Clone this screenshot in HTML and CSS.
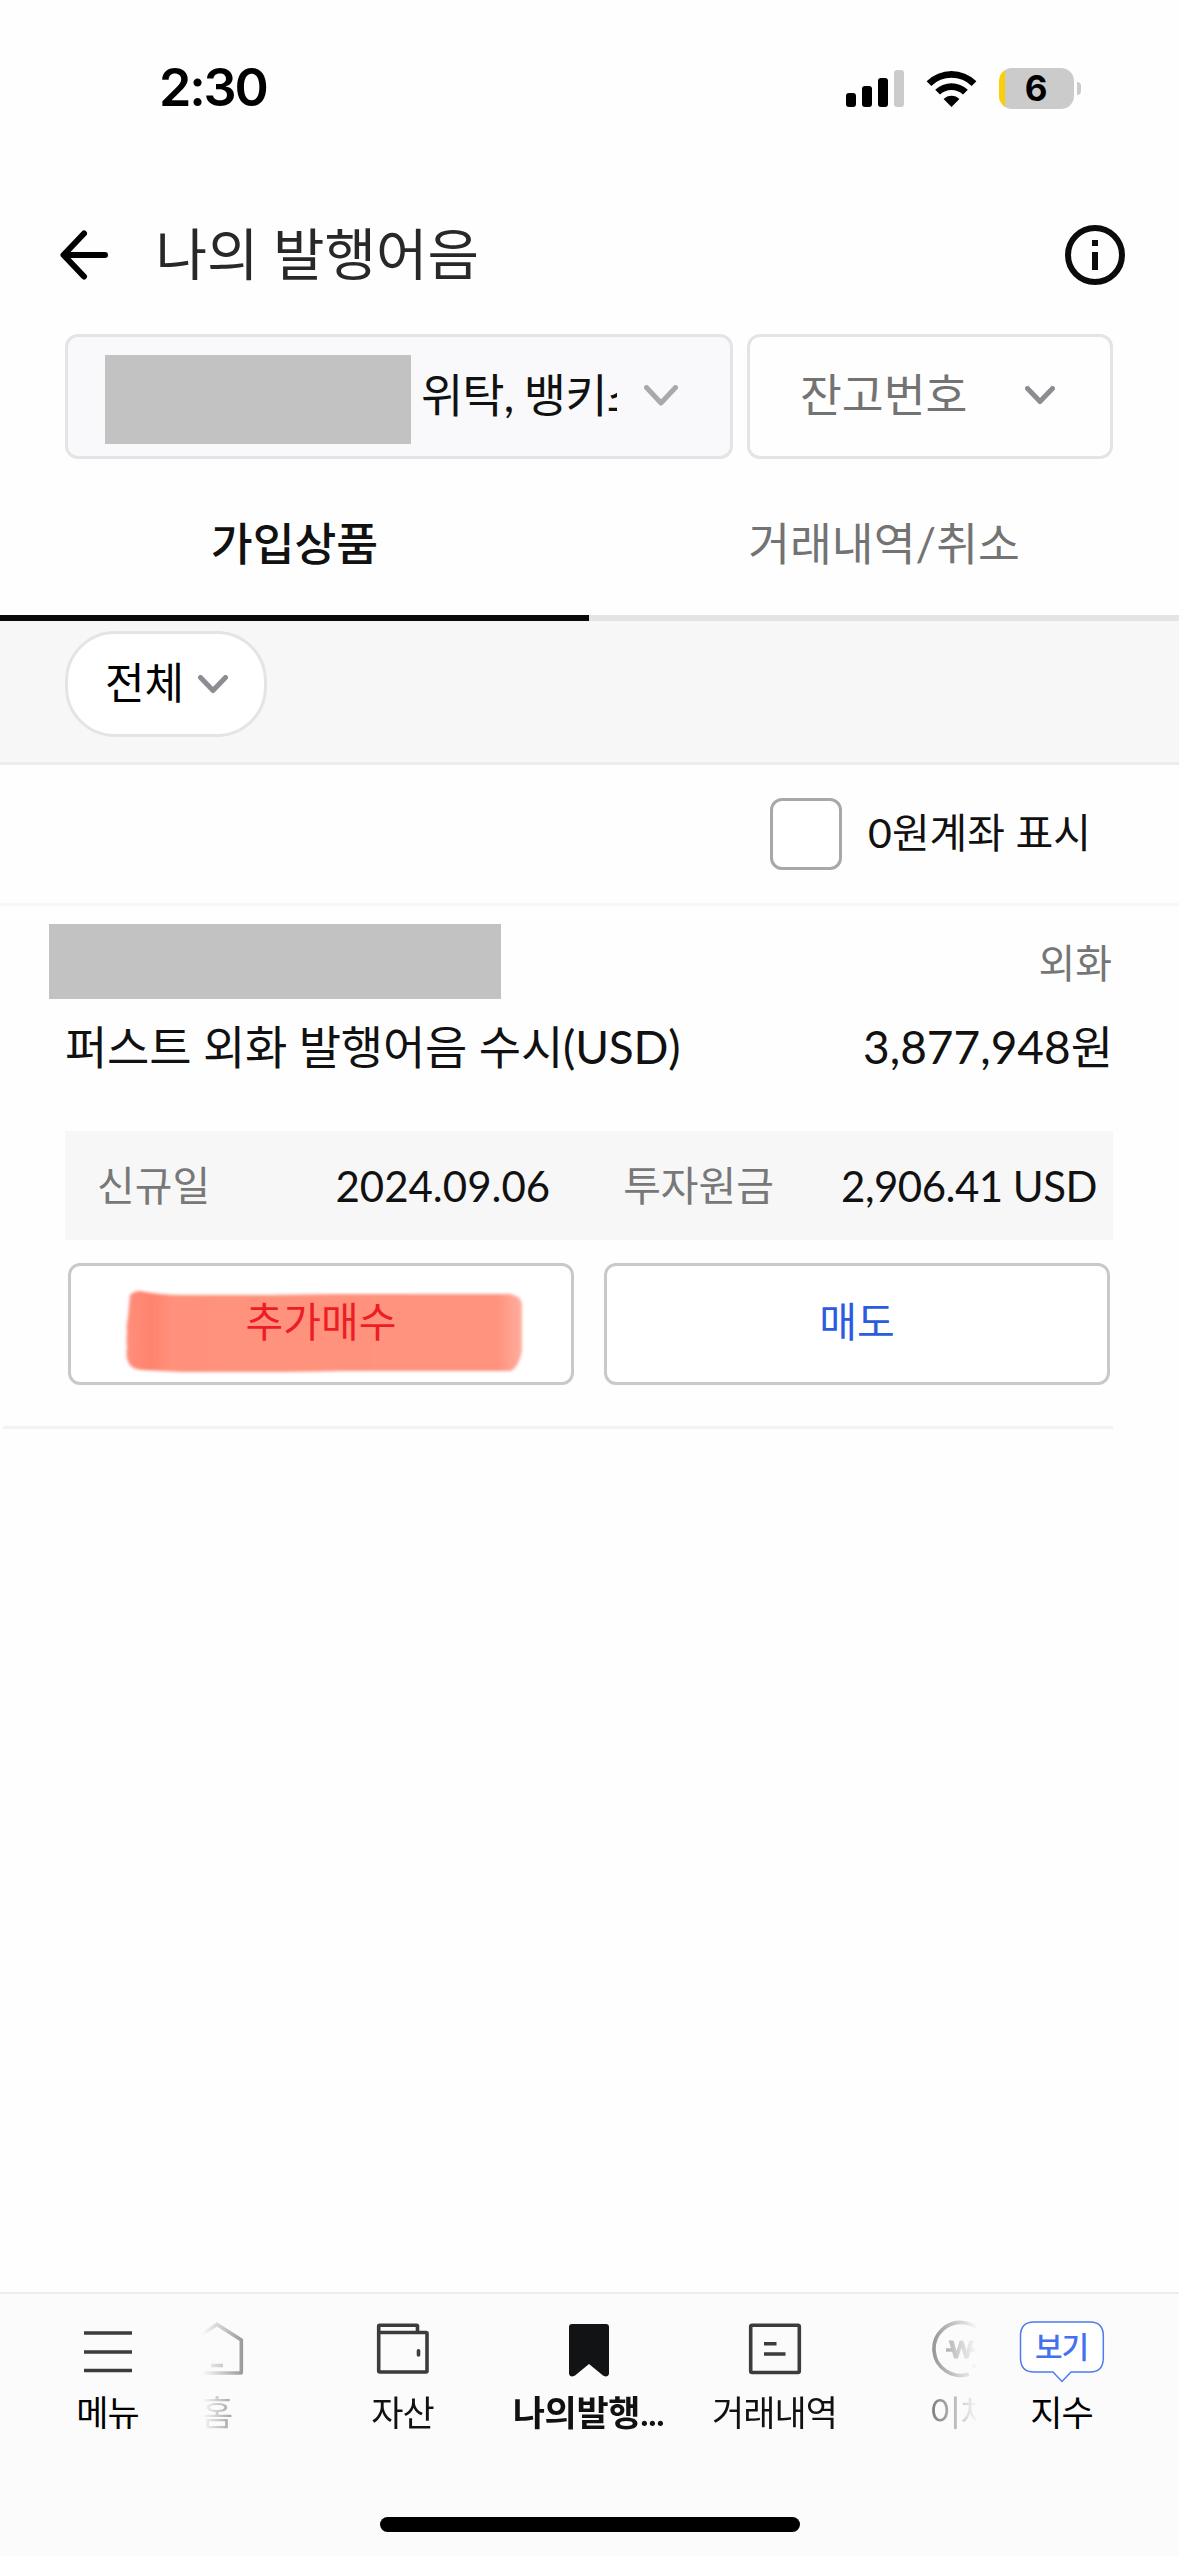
FILE: index.html
```html
<!DOCTYPE html>
<html lang="ko">
<head>
    <meta charset="UTF-8">
    <meta name="viewport" content="width=device-width, initial-scale=1.0">
    <title>나의 발행어음</title>
    <link rel="stylesheet" href="styles.css">
</head>
<body>
    <div class="screen">
        <!-- Status bar -->
        <div class="status-bar">
            <span class="time">2:30</span>
            <div class="status-icons">
                <svg class="signal" width="58" height="37" viewBox="0 0 58 37">
                    <rect x="0" y="23" width="10" height="14" rx="3"/>
                    <rect x="16" y="16" width="10" height="21" rx="3"/>
                    <rect x="32" y="8" width="10" height="29" rx="3"/>
                    <rect x="48" y="0" width="10" height="37" rx="3" fill="#cbcbcb"/>
                </svg>
                <svg class="wifi" width="51" height="37" viewBox="0 0 51 37">
                    <path d="M0.6 11.2 A35.5 35.5 0 0 1 50.4 11.2 L45.6 15.9 A28.8 28.8 0 0 0 5.4 15.9 Z"/>
                    <path d="M9.2 19.8 A23.5 23.5 0 0 1 41.8 19.8 L37 24.6 A16.6 16.6 0 0 0 14 24.6 Z"/>
                    <path d="M17.6 29 A11 11 0 0 1 33.4 29 L25.5 37 Z"/>
                </svg>
                <div class="battery">
                    <div class="battery-body">6</div>
                    <div class="battery-tip"></div>
                </div>
            </div>
        </div>

        <!-- Title -->
        <header class="header">
            <svg class="back" width="50" height="50" viewBox="0 0 50 50">
                <path d="M46 25 H5 M25 3.5 L4.500 25 L25 46.5"/>
            </svg>
            <h1>나의 발행어음</h1>
            <svg class="info" width="60" height="60" viewBox="0 0 60 60">
                <circle cx="30" cy="30" r="27"/>
                <path d="M30 15 V21 M30 27 V45"/>
            </svg>
        </header>

        <!-- Account selects -->
        <div class="selects">
            <div class="select account">
                <span class="mask mask-account"></span>
                <span class="account-name">위탁, 뱅키스</span>
                <svg width="34" height="22" viewBox="0 0 34 22"><path stroke="#a9a9ab" d="M2.5 2.5 L17 18 L31.5 2.5"/></svg>
            </div>
            <div class="select balance">
                <span>잔고번호</span>
                <svg width="30" height="20" viewBox="0 0 30 20"><path d="M2.5 2.5 L15 15.5 L27.5 2.5"/></svg>
            </div>
        </div>

        <!-- Tabs -->
        <div class="tabs">
            <div class="tab active">가입상품</div>
            <div class="tab">거래내역/취소</div>
        </div>

        <div class="filter">
            <div class="pill">
                <span>전체</span>
                <svg width="30" height="20" viewBox="0 0 30 20"><path d="M2.5 2.5 L15 15.5 L27.5 2.5"/></svg>
            </div>
        </div>

        <label class="zero-row">
            <input type="checkbox">
            <span>0원계좌 표시</span>
        </label>

        <!-- Product -->
        <section class="product">
            <div class="product-top">
                <span class="mask mask-number"></span>
                <span class="kind">외화</span>
            </div>
            <div class="product-name">
                <span class="name">퍼스트 외화 발행어음 수시(USD)</span>
                <span>3,877,948원</span>
            </div>
            <div class="detail">
                <span class="key">신규일</span>
                <span class="value date">2024.09.06</span>
                <span class="key">투자원금</span>
                <span class="value amount">2,906.41 USD</span>
            </div>
            <div class="actions">
                <button class="buy">
                    <svg class="marker" width="404" height="92" viewBox="0 0 404 92">
                        <defs>
                            <linearGradient id="ink">
                                <stop offset="0" stop-color="#ff8f7b"/>
                                <stop offset="0.06" stop-color="#ff836d"/>
                                <stop offset="0.12" stop-color="#ff917c"/>
                                <stop offset="0.94" stop-color="#ff937e"/>
                                <stop offset="1" stop-color="#ffae9f"/>
                            </linearGradient>
                            <filter id="soft" x="-5%" y="-10%" width="110%" height="120%">
                                <feGaussianBlur stdDeviation="1.6"/>
                            </filter>
                        </defs>
                        <path fill="url(#ink)" filter="url(#soft)" d="M8 8 Q12 4 18 4 Q38 8 60 8 H150 Q190 7 210 7 H388 Q399 9 400 17 V64 Q397 80 389 84 H220 Q170 85 140 85 H60 L20 83 Q8 83 5 72 Q4 66 5 60 Q4 54 5 46 Q4 38 6 30 Z"/>
                    </svg>
                    <span>추가매수</span>
                </button>
                <button class="sell">매도</button>
            </div>
        </section>

        <!-- Bottom navigation -->
        <nav class="bottom-nav">
            <div class="nav-row">
                <div class="nav-item nav-menu">
                    <svg width="60" height="60" viewBox="0 0 60 60"><path d="M6 15 H54 M6 34 H54 M6 52.5 H54"/></svg>
                    <span>메뉴</span>
                </div>
                <div class="nav-scroll">
                    <div class="nav-item">
                        <svg width="60" height="60" viewBox="0 0 60 60">
                            <path d="M30 6.5 L54.3 22 V54.3 Q54.3 55 53.5 55 H6.5 Q5.7 55 5.7 54 V22 Z M24 47.5 H36"/>
                        </svg>
                        <span>홈</span>
                    </div>
                    <div class="nav-item">
                        <svg width="60" height="60" viewBox="0 0 60 60">
                            <path d="M5.7 14.5 V8 Q5.7 7.2 6.5 7.2 H43.5 Q44.5 7.2 44.5 8 V14.5 M5.7 14.5 H53 Q54 14.5 54 15.5 V53 Q54 54 53 54 H6.7 Q5.7 54 5.7 53 Z"/>
                            <path stroke-linecap="round" d="M45.5 32.8 V37"/>
                        </svg>
                        <span>자산</span>
                    </div>
                    <div class="nav-item current">
                        <svg width="60" height="60" viewBox="0 0 60 60">
                            <path class="solid" d="M13 6 H47 Q50 6 50 9 V56 Q49 60 44 57.5 L30 46 L16 57.5 Q11 60 10 56 V9 Q10 6 13 6 Z"/>
                        </svg>
                        <span>나의발행...</span>
                    </div>
                    <div class="nav-item">
                        <svg width="60" height="60" viewBox="0 0 60 60">
                            <rect x="5.7" y="7.2" width="48.6" height="47.3" rx="1.5"/>
                            <path d="M19 25.7 H31.5 M19 36 H40.5"/>
                        </svg>
                        <span>거래내역</span>
                    </div>
                    <div class="nav-item">
                        <svg width="60" height="60" viewBox="0 0 60 60">
                            <path d="M38 56 A26.5 26.5 0 1 1 54 41 M42 48 H54 M15 32 H22 M37 32 H44"/>
                            <text class="won" x="30" y="39.5" text-anchor="middle">W</text>
                        </svg>
                        <span>이체</span>
                    </div>
                </div>
                <div class="nav-item nav-index">
                    <svg width="86" height="62" viewBox="0 0 86 62">
                        <path class="bubble" d="M15 1 H71 Q84.3 1 84.3 15 V37 Q84.3 51 71 51 H52 L43 60.5 L34 51 H15 Q1.5 51 1.5 37 V15 Q1.5 1 15 1 Z"/>
                        <text class="bubble-text" x="42.5" y="37" text-anchor="middle">보기</text>
                    </svg>
                    <span>지수</span>
                </div>
            </div>
            <div class="home-indicator"></div>
        </nav>
    </div>
</body>
</html>
```
FILE: styles.css
```css
* {
    box-sizing: border-box;
}

body {
    margin: 0;
    background: #fefefe;
    color: #111;
    font-family: Lato, "Noto Sans CJK KR", sans-serif;
    font-size: 46px;
    line-height: 60px;
}

.screen {
    width: 1179px;
    height: 2556px;
    display: flex;
    flex-direction: column;
    overflow: hidden;
    white-space: nowrap;
}

svg {
    display: block;
    flex: none;
}

.mask {
    background: #c2c2c2;
    flex: none;
}

/* Status bar */
.status-bar {
    height: 200px;
    padding: 58px 98px 0 159px;
    display: flex;
    justify-content: space-between;
    align-items: flex-start;
    font-family: Inter, sans-serif;
    font-weight: 600;
    color: #000;
}

.time {
    font-size: 52px;
    letter-spacing: -2.2px;
}

.status-icons {
    display: flex;
    align-items: center;
    height: 60px;
}

.wifi {
    margin-left: 22px;
}

.battery {
    display: flex;
    align-items: center;
    gap: 3px;
    margin-left: 22px;
}

.battery-body {
    width: 75px;
    height: 41px;
    border-radius: 13px;
    background: linear-gradient(to right, #fbcd0a 5.5px, #cbcbcb 5.5px);
    font-size: 35px;
    font-weight: 700;
    line-height: 41px;
    text-align: center;
    text-indent: -1px;
}

.battery-tip {
    width: 4px;
    height: 13px;
    border-radius: 0 4px 4px 0;
    background: #cbcbcb;
}

/* Header */
.header {
    height: 110px;
    padding: 0 54px 0 59px;
    display: flex;
    align-items: center;
}

.header h1 {
    flex: 1;
    margin: -2px 0 0 46.5px;
    font-size: 56px;
    font-weight: 400;
    color: #282828;
}

.back path {
    fill: none;
    stroke: #000;
    stroke-width: 6;
    stroke-linecap: round;
    stroke-linejoin: round;
}

.info {
    fill: none;
    stroke: #0b0b0b;
    stroke-width: 6;
}

/* Selects */
.selects {
    display: flex;
    gap: 14px;
    padding: 24px 66px 0 65px;
}

.select {
    height: 125px;
    display: flex;
    align-items: center;
    padding-bottom: 4px;
    border: 3px solid #e3e4e6;
    border-radius: 13px;
}

.account {
    width: 668px;
    padding-left: 37px;
    background: #f9f9fb;
}

.mask-account {
    width: 306px;
    height: 89px;
    margin-top: 9px;
}

.account-name {
    width: 204px;
    margin: 0 27px 0 2px;
    padding-left: 8px;
    overflow: hidden;
    letter-spacing: -1px;
}

.select svg,
.pill svg {
    margin-top: 3px;
    fill: none;
    stroke: #8c8c92;
    stroke-width: 5;
    stroke-linecap: round;
    stroke-linejoin: round;
}

.balance {
    flex: 1;
    justify-content: space-between;
    padding-left: 50px;
    padding-right: 55px;
    color: #737373;
    font-size: 45.5px;
}

/* Tabs */
.tabs {
    display: flex;
    height: 162px;
}

.tab {
    width: 590px;
    padding-top: 55px;
    border-bottom: 6px solid #e3e4e5;
    color: #737373;
    font-size: 45.5px;
    text-align: center;
}

.tab.active {
    width: 589px;
    border-color: #0a0a0a;
    color: #111;
    font-weight: 500;
}

.filter {
    height: 144px;
    padding: 10px 65px;
    background: #f7f7f7;
    border-bottom: 3px solid #ececee;
}

.pill {
    width: 202px;
    height: 106px;
    padding: 0 36px 2px 37px;
    display: flex;
    align-items: center;
    justify-content: space-between;
    background: #fff;
    border: 3px solid #e3e4e6;
    border-radius: 50px;
    color: #000;
    font-size: 43px;
}

.zero-row {
    height: 141px;
    padding: 0 88px 2px 0;
    display: flex;
    align-items: center;
    justify-content: flex-end;
    gap: 26px;
    border-bottom: 3px solid #f7f7f7;
    font-size: 41px;
}

.zero-row input {
    appearance: none;
    width: 72px;
    height: 72px;
    margin: 2px 0 0;
    border: 3px solid #a8a8ac;
    border-radius: 12px;
    background: #fff;
}

/* Product */
.product {
    margin: 0 66px 0 3px;
    padding: 18px 0 41px 62px;
    border-bottom: 3px solid #f1f2f5;
}

.product-top {
    height: 75px;
    margin-left: -16px;
    display: flex;
    justify-content: space-between;
}

.mask-number {
    width: 452px;
}

.kind {
    padding: 9px 1px 0 0;
    color: #767676;
    font-size: 40px;
}

.product-name {
    display: flex;
    justify-content: space-between;
    padding-top: 18px;
    height: 132px;
}

.name {
    letter-spacing: -0.2px;
}

.detail {
    height: 109px;
    padding: 0 16px 0 32px;
    display: flex;
    align-items: center;
    background: #f7f7f7;
    font-size: 41px;
}

.key {
    color: #787878;
}

.value {
    font-size: 42px;
}

.date {
    flex: 1;
    text-align: right;
    margin-right: 73px;
}

.amount {
    margin-left: 67px;
    letter-spacing: -0.5px;
}

.actions {
    display: flex;
    gap: 30px;
    padding: 23px 3px 0;
}

.actions button {
    position: relative;
    flex: 1;
    height: 122px;
    padding: 0 0 4px;
    background: #fff;
    border: 3px solid #c9c9c9;
    border-radius: 12px;
    font: inherit;
    font-size: 41px;
}

.actions .buy {
    color: #ee1c25;
}

.buy span {
    position: relative;
}

/* highlighter stroke behind the label */
.marker {
    position: absolute;
    left: 51px;
    top: 21px;
}

.actions .sell {
    color: #2b5ce0;
}

/* Bottom navigation */
.bottom-nav {
    margin-top: auto;
    height: 264px;
    background: #fbfbfb;
    border-top: 2px solid #ebecef;
}

.nav-row {
    display: flex;
    height: 223px;
    padding-top: 24px;
}

.nav-item {
    width: 186px;
    flex: none;
    display: flex;
    flex-direction: column;
    align-items: center;
    color: #111;
    font-size: 35px;
    letter-spacing: -1px;
}

.nav-item svg {
    fill: none;
    stroke: #3c3c3e;
    stroke-width: 3.6;
}

.nav-item > span {
    margin-top: 4px;
    margin-right: 1px;
    line-height: 60px;
}

.nav-item .won {
    fill: #3c3c3e;
    stroke-width: 1;
    font-size: 23px;
    font-weight: 900;
}

.nav-menu,
.nav-index {
    color: #000;
}

.nav-menu {
    width: 202px;
    padding-left: 14px;
}

.nav-scroll {
    display: flex;
    width: 776px;
    height: 150px;
    overflow: hidden;
    -webkit-mask-image: linear-gradient(to right, transparent, #000 80px, #000 690px, transparent);
    mask-image: linear-gradient(to right, transparent, #000 80px, #000 690px, transparent);
}

.nav-scroll .nav-item:first-child {
    margin-left: -78px;
}

.nav-item.current {
    font-weight: 700;
    letter-spacing: -0.3px;
}

.nav-item .solid {
    fill: #121315;
    stroke: none;
}

.nav-index {
    width: 168px;
}

.nav-index svg {
    margin: 3px 0 -5px;
}

.nav-item .bubble {
    fill: #fff;
    stroke: #4f7bf0;
    stroke-width: 1.5;
}

.nav-item .bubble-text {
    fill: #4471ee;
    stroke: none;
    font-size: 30px;
    font-weight: 500;
}

.home-indicator {
    width: 420px;
    height: 15px;
    margin: 0 auto;
    border-radius: 8px;
    background: #000;
}
```
